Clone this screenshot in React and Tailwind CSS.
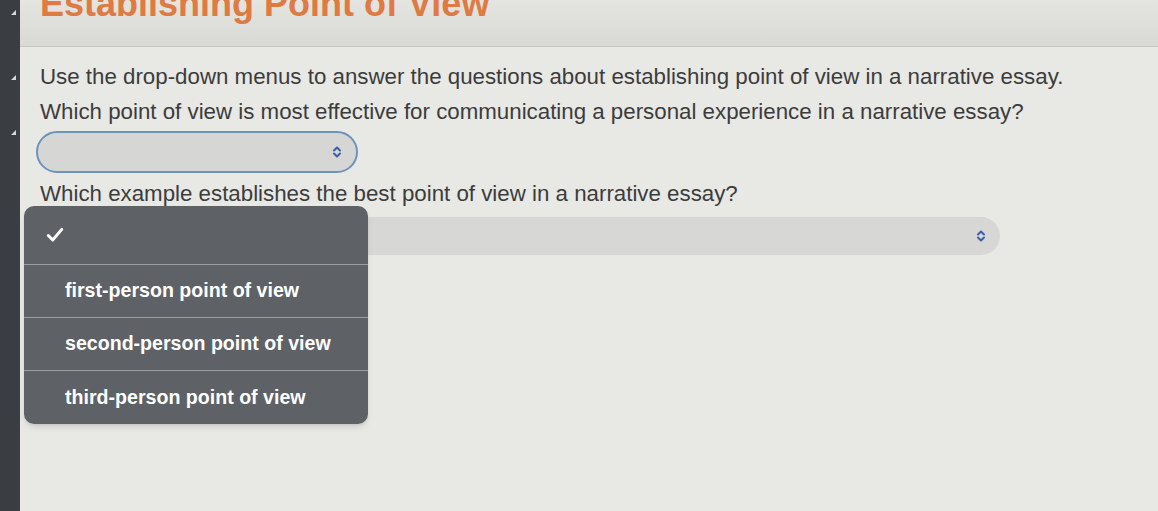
const Chevron = ({ className }) => (
  <svg width="10" height="14" viewBox="0 0 10 14" className={className} fill="none" stroke="#3b5fa8" strokeWidth="2" strokeLinecap="round" strokeLinejoin="round">
    <path d="M2 5.5 L5 2.5 L8 5.5" />
    <path d="M2 8.5 L5 11.5 L8 8.5" />
  </svg>
);

const Notch = () => (
  <div className="w-0 h-0 border-l-[5px] border-l-transparent border-b-[5px] border-b-[#d8d8d8]"></div>
);

const options = ['first-person point of view', 'second-person point of view', 'third-person point of view'];

const App = () => {
  return (
    <div className="w-[1158px] h-[511px] flex overflow-hidden font-['Liberation_Sans',Arial,sans-serif]">
      <div className="w-[20px] bg-[#3a3d42] flex flex-col items-end pr-[4px]">
        <div className="mt-[10px]"><Notch /></div>
        <div className="mt-[60px]"><Notch /></div>
        <div className="mt-[50px]"><Notch /></div>
      </div>

      <div className="flex-1 bg-[#e8e8e5] relative">
        <div className="h-[47px] overflow-hidden bg-gradient-to-b from-[#e4e4e1] to-[#d9d9d6] border-b border-[#c6c6c3]">
          <h1 className="ml-[20px] -mt-[16px] text-[36px] font-bold text-[#df7a43] leading-[40px]">
            Establishing Point of View
          </h1>
        </div>

        <div className="pl-[20px] pt-[16px] text-[#3c3c3c]">
          <p className="text-[22.3px] leading-[28px]">
            Use the drop-down menus to answer the questions about establishing point of view in a narrative essay.
          </p>
          <p className="mt-[7px] text-[22.3px] leading-[28px]">
            Which point of view is most effective for communicating a personal experience in a narrative essay?
          </p>

          <div className="mt-[5px] w-[322px] h-[42px] -ml-[4px] rounded-full border-2 border-[#6d93bb] bg-[#d6d6d4] flex items-center justify-end pr-[14px]">
            <Chevron />
          </div>

          <p className="mt-[7px] text-[22.3px] leading-[28px]">
            Which example establishes the best point of view in a narrative essay?
          </p>

          <div className="mt-[9px] w-[964px] h-[38px] -ml-[4px] rounded-full bg-[#d7d7d5] flex items-center justify-end pr-[14px]">
            <Chevron />
          </div>
        </div>

        <div className="absolute left-[4px] top-[206px] w-[344px] rounded-[10px] bg-[#5e6267] shadow-md overflow-hidden">
          <div className="h-[59px] flex items-center pl-[22px] border-b border-[#9a9da1]">
            <svg width="18" height="16" viewBox="0 0 16 14" fill="none" stroke="#ffffff" strokeWidth="2.6" strokeLinecap="round" strokeLinejoin="round">
              <path d="M2 7.5 L6 11.5 L14 2" />
            </svg>
          </div>
          {options.map((o, i) => (
            <div
              key={o}
              className={`h-[53px] flex items-center pl-[41px] text-white text-[19.6px] font-bold ${i < options.length - 1 ? 'border-b border-[#9a9da1]' : ''}`}
            >
              {o}
            </div>
          ))}
        </div>
      </div>
    </div>
  );
};

export default App;
